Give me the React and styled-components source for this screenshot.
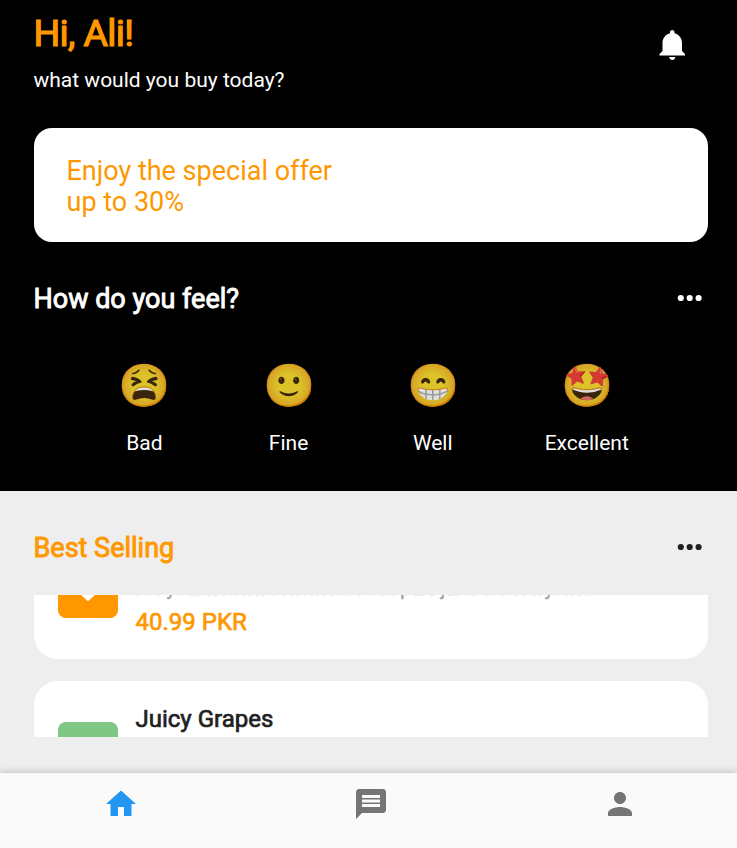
import React from "react";
import styled, { createGlobalStyle } from "styled-components";

const Global = createGlobalStyle`
  *{box-sizing:border-box}
  body{margin:0;background:#eee;font-family:Roboto,"Liberation Sans",sans-serif}
`;
const Hero = styled.header`height:491px;background:#000;color:#fff;padding:0 29.5px 0 33.5px;overflow:hidden;display:flex;flex-direction:column;`;
const Row = styled.div`display:flex;justify-content:space-between;align-items:center;`;
const Greeting = styled(Row)`height:128.4px;flex:none;align-items:flex-start;`;
const Title = styled.h1`margin:11px 0 0;font-size:37.5px;line-height:45px;letter-spacing:-.65px;font-weight:400;color:#ff9800;-webkit-text-stroke:1.2px #ff9800;`;
const Sub = styled.p`margin:12px 0 0;font-size:21px;line-height:24px;`;
const Bell = styled.svg`width:36px;height:36px;margin:27px 17px 0 0;fill:#fff;`;
const Offer = styled.section`height:114px;flex:none;border-radius:18px;background:#fff;color:#ff9800;padding:27.6px 33px;font-size:27px;line-height:31px;white-space:pre-line;`;
const SectionRow = styled(Row)`height:32px;flex:none;margin-top:${p => p.$top}px;padding-right:2px;`;
const Heading = styled.h2`margin:2px 0 0;font-size:27px;line-height:32px;font-weight:400;color:${p => p.$color};-webkit-text-stroke:.9px ${p => p.$color};`;
const Dots = styled.svg`width:32px;height:32px;fill:${p => p.$color};`;
const Moods = styled.div`display:flex;justify-content:space-evenly;margin:47px -1px 0 -1px;`;
const Mood = styled.div`min-width:64.5px;display:flex;flex-direction:column;align-items:center;font-size:21px;line-height:24px;`;
const Face = styled.span`height:50px;font-size:42px;line-height:50px;opacity:.87;margin-bottom:20px;`;
const Best = styled.main`height:282px;padding:0 29.5px 0 33.5px;overflow:hidden;`;
const List = styled.div`height:142px;margin-top:32px;overflow:hidden;display:flex;flex-direction:column;gap:22px;`;
const Card = styled.article`height:142px;flex:none;margin-top:${p => p.$shift || 0}px;border-radius:24px;background:#fff;display:flex;align-items:center;gap:18px;padding:0 24px;`;
const Tile = styled.div`width:60px;height:60px;border-radius:8px;background:${p => p.$color};display:grid;place-items:center;`;
const Heart = styled.svg`width:34px;height:34px;fill:#fff;`;
const Name = styled.div`font-size:24px;line-height:28px;color:#212121;-webkit-text-stroke:.7px #212121;`;
const Desc = styled.div`font-size:18.2px;line-height:22px;color:#9e9e9e;-webkit-text-stroke:.5px #9e9e9e;margin:9px 0 8px;`;
const Price = styled(Name)`color:#ff9800;-webkit-text-stroke-color:#ff9800;`;
const Nav = styled.nav`position:relative;height:75px;background:#fafafa;display:flex;justify-content:space-between;padding:13px 98.6px 0 102.8px;box-shadow:0 -1px 7px rgba(0,0,0,.2);`;
const Icon = styled.svg`width:36px;height:36px;fill:${p => p.$color};`;

const moods = [["😫", "Bad"], ["🙂", "Fine"], ["😁", "Well"], ["🤩", "Excellent"]];
const products = [
  { name: "Fresh Oranges", text: "For your kitchen at home we sell pure juice for everyone..", price: "40.99 PKR", color: "#ff9800", shift: -78 },
  { name: "Juicy Grapes", text: "Sweet and juicy grapes for you", price: "30.99 PKR", color: "#81c784" },
];
const tabs = [
  ["#2196f3", "M10 20v-6h4v6h5v-8h3L12 3 2 12h3v8z"],
  ["#757575", "M20 2H4c-1.1 0-1.99.9-1.99 2L2 22l4-4h14c1.1 0 2-.9 2-2V4c0-1.1-.9-2-2-2zm-2 12H6v-2h12v2zm0-3H6V9h12v2zm0-3H6V6h12v2z"],
  ["#757575", "M12 12c2.21 0 4-1.79 4-4s-1.79-4-4-4-4 1.79-4 4 1.79 4 4 4zm0 2c-2.67 0-8 1.34-8 4v2h16v-2c0-2.66-5.33-4-8-4z"],
];
const More = ({ color }) => <Dots viewBox="0 0 32 32" $color={color}><circle cx="6.8" cy="16" r="3.1" /><circle cx="15.7" cy="16" r="3.1" /><circle cx="24.6" cy="16" r="3.1" /></Dots>;

export default function App() {
  return <>
    <Global />
    <Hero>
      <Greeting>
        <div><Title>Hi, Ali!</Title><Sub>what would you buy today?</Sub></div>
        <Bell viewBox="0 0 24 24"><path d="M11.5 22c1.1 0 2-.9 2-2h-4c0 1.1.9 2 2 2zm6.5-6v-5.5c0-3.07-2.13-5.64-5-6.32V3.5c0-.83-.67-1.5-1.5-1.5S10 2.67 10 3.5v.68c-2.87.68-5 3.25-5 6.32V16l-2 2v1h17v-1l-2-2z" /></Bell>
      </Greeting>
      <Offer>{"Enjoy the special offer\nup to 30%"}</Offer>
      <SectionRow $top={39.6}><Heading $color="#fff">How do you feel?</Heading><More color="#fff" /></SectionRow>
      <Moods>{moods.map(([e, l]) => <Mood key={l}><Face>{e}</Face>{l}</Mood>)}</Moods>
    </Hero>
    <Best>
      <SectionRow $top={40}><Heading $color="#ff9800">Best Selling</Heading><More color="#212121" /></SectionRow>
      <List>{products.map(p => <Card key={p.name} $shift={p.shift}>
        <Tile $color={p.color}><Heart viewBox="0 0 24 24"><path d="M12 21.35l-1.45-1.32C5.4 15.36 2 12.28 2 8.5 2 5.42 4.42 3 7.5 3c1.74 0 3.41.81 4.5 2.09C13.09 3.81 14.76 3 16.5 3 19.58 3 22 5.42 22 8.5c0 3.78-3.4 6.86-8.55 11.54L12 21.35z" /></Heart></Tile>
        <div><Name>{p.name}</Name><Desc>{p.text}</Desc><Price>{p.price}</Price></div>
      </Card>)}</List>
    </Best>
    <Nav>{tabs.map(([c, d], i) => <Icon key={i} viewBox="0 0 24 24" $color={c}><path d={d} /></Icon>)}</Nav>
  </>;
}
